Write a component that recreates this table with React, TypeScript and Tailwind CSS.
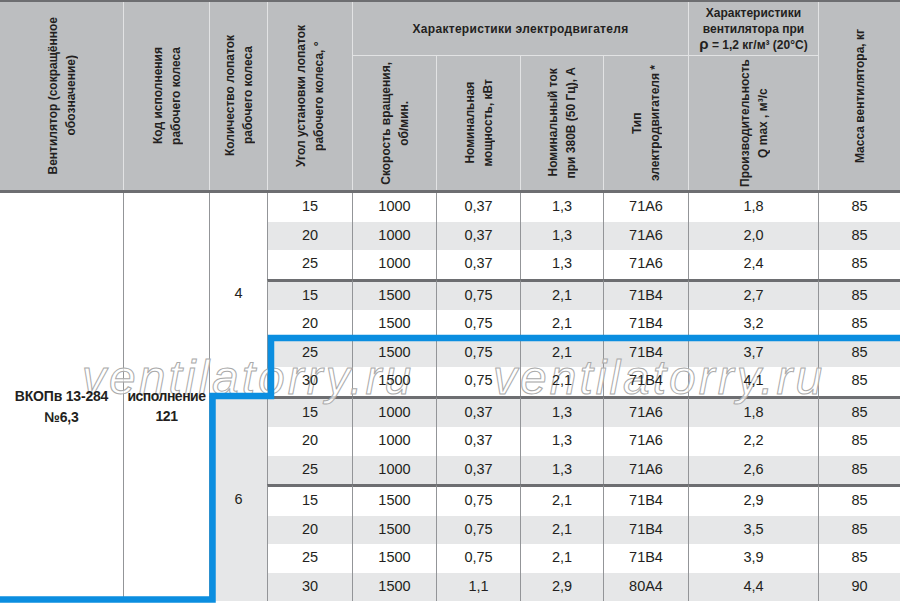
import React from "react";

const COLS = "grid-cols-[123px_86px_58px_85px_84px_84px_83px_85px_130px_82px]";

const rows: string[][] = [
  ["15", "1000", "0,37", "1,3", "71A6", "1,8", "85"],
  ["20", "1000", "0,37", "1,3", "71A6", "2,0", "85"],
  ["25", "1000", "0,37", "1,3", "71A6", "2,4", "85"],
  ["15", "1500", "0,75", "2,1", "71B4", "2,7", "85"],
  ["20", "1500", "0,75", "2,1", "71B4", "3,2", "85"],
  ["25", "1500", "0,75", "2,1", "71B4", "3,7", "85"],
  ["30", "1500", "0,75", "2,1", "71B4", "4,1", "85"],
  ["15", "1000", "0,37", "1,3", "71A6", "1,8", "85"],
  ["20", "1000", "0,37", "1,3", "71A6", "2,2", "85"],
  ["25", "1000", "0,37", "1,3", "71A6", "2,6", "85"],
  ["15", "1500", "0,75", "2,1", "71B4", "2,9", "85"],
  ["20", "1500", "0,75", "2,1", "71B4", "3,5", "85"],
  ["25", "1500", "0,75", "2,1", "71B4", "3,9", "85"],
  ["30", "1500", "1,1", "2,9", "80A4", "4,4", "90"],
];

const thickRows = new Set([3, 7, 10]);

function VText({ children }: { children: React.ReactNode }) {
  return (
    <div className="[writing-mode:vertical-rl] rotate-180 text-center leading-[18px] whitespace-nowrap">
      {children}
    </div>
  );
}

function HeadCell({
  className,
  children,
}: {
  className?: string;
  children: React.ReactNode;
}) {
  return (
    <div className={"flex items-center justify-center " + (className ?? "")}>
      {children}
    </div>
  );
}

export default function App() {
  return (
    <div className="w-[900px] h-[603px] overflow-hidden bg-white font-['Liberation_Sans',Arial,sans-serif] text-[#231f20]">
      {/* Header */}
      <div
        className={
          "grid " +
          COLS +
          " grid-rows-[53px_135px] bg-[#bcbec0] border-t-2 border-t-[#6d6e71] border-b-[3px] border-b-[#6d6e71] text-[12px] font-bold"
        }
      >
        <HeadCell className="row-span-2">
          <VText>
            Вентилятор (сокращённое
            <br />
            обозначение)
          </VText>
        </HeadCell>
        <HeadCell className="row-span-2 border-l border-[#e2e3e4]">
          <VText>
            Код исполнения
            <br />
            рабочего колеса
          </VText>
        </HeadCell>
        <HeadCell className="row-span-2 border-l border-[#e2e3e4]">
          <VText>
            Количество лопаток
            <br />
            рабочего колеса
          </VText>
        </HeadCell>
        <HeadCell className="row-span-2 border-l border-[#e2e3e4]">
          <VText>
            Угол установки лопаток
            <br />
            рабочего колеса, °
          </VText>
        </HeadCell>
        <HeadCell className="col-span-4 border-l border-[#e2e3e4]">
          <span className="tracking-[0.3px]">Характеристики электродвигателя</span>
        </HeadCell>
        <HeadCell className="border-l border-[#e2e3e4]">
          <div className="text-center leading-[16px] text-[12px]">
            Характеристики
            <br />
            вентилятора при
            <br />
            <span className="text-[15px] leading-[10px]">ρ</span> = 1,2 кг/м³ (20°С)
          </div>
        </HeadCell>
        <HeadCell className="row-span-2 border-l border-[#e2e3e4]">
          <VText>Масса вентилятора, кг</VText>
        </HeadCell>
        <HeadCell className="border-l border-t border-[#e2e3e4]">
          <VText>
            Скорость вращения,
            <br />
            об/мин.
          </VText>
        </HeadCell>
        <HeadCell className="border-l border-t border-[#e2e3e4]">
          <VText>
            Номинальная
            <br />
            мощность, кВт
          </VText>
        </HeadCell>
        <HeadCell className="border-l border-t border-[#e2e3e4]">
          <VText>
            Номинальный ток
            <br />
            при 380В (50 Гц), А
          </VText>
        </HeadCell>
        <HeadCell className="border-l border-t border-[#e2e3e4]">
          <VText>
            Тип
            <br />
            электродвигателя *
          </VText>
        </HeadCell>
        <HeadCell className="border-l border-t border-[#e2e3e4]">
          <VText>
            Производительность
            <br />
            Q max , м³/с
          </VText>
        </HeadCell>
      </div>

      {/* Body */}
      <div className="relative">
        <div
          className={
            "grid " +
            COLS +
            " grid-rows-[28.5px_28.5px_28.5px_31.5px_28.5px_28.5px_28.5px_31.5px_28.5px_28.5px_31.5px_28.5px_28.5px_28.5px] text-[14.5px]"
          }
        >
          <div className="row-span-14 col-start-1 row-start-1 flex items-center justify-center pt-[20px] bg-white">
            <div className="relative z-20 text-center font-bold text-[14px] tracking-[-0.2px] leading-[21px]">
              ВКОПв 13-284
              <br />
              №6,3
            </div>
          </div>
          <div className="row-span-14 col-start-2 row-start-1 flex items-center justify-center pt-[18px] bg-white border-l border-[#939598]">
            <div className="relative z-20 text-center font-bold text-[14px] tracking-[-0.5px] leading-[20px]">
              исполнение
              <br />
              121
            </div>
          </div>
          <div className="row-span-7 col-start-3 row-start-1 flex items-center justify-center bg-white border-l border-[#939598]">
            <span className="relative z-20">4</span>
          </div>
          <div className="row-span-7 col-start-3 row-start-8 flex items-center justify-center bg-[#e6e7e8] border-l border-t-[3px] border-l-[#939598] border-t-[#6d6e71]">
            <span className="relative z-20">6</span>
          </div>
          {rows.map((r, i) =>
            r.map((v, j) => (
              <div
                key={i + "-" + j}
                className={
                  "flex items-center justify-center border-l border-l-[#939598] " +
                  (i % 2 === 1 ? "bg-[#e6e7e8] " : "bg-white ") +
                  (thickRows.has(i) ? "border-t-[3px] border-t-[#6d6e71]" : "")
                }
              >
                <span className="relative z-20">{v}</span>
              </div>
            ))
          )}
        </div>

        {/* watermark */}
        <div
          aria-hidden="true"
          className="absolute z-10 left-[82px] top-[161px] text-[48px] leading-[48px] italic tracking-[3px] text-white/70 [-webkit-text-stroke:1px_#aaaaaa] whitespace-nowrap pointer-events-none"
        >
          ventilatorry.ru
        </div>
        <div
          aria-hidden="true"
          className="absolute z-10 left-[493px] top-[161px] text-[48px] leading-[48px] italic tracking-[3px] text-white/70 [-webkit-text-stroke:1px_#aaaaaa] whitespace-nowrap pointer-events-none"
        >
          ventilatorry.ru
        </div>

        {/* blue outline */}
        <svg
          className="absolute z-30 left-0 top-0 pointer-events-none"
          width="900"
          height="410"
          viewBox="0 193 900 410"
        >
          <polyline
            points="0,599.5 212.5,599.5 212.5,396 271,396 271,338 900,338"
            fill="none"
            stroke="#0b8ee0"
            strokeWidth="6.5"
            strokeLinejoin="miter"
          />
        </svg>
      </div>
    </div>
  );
}
